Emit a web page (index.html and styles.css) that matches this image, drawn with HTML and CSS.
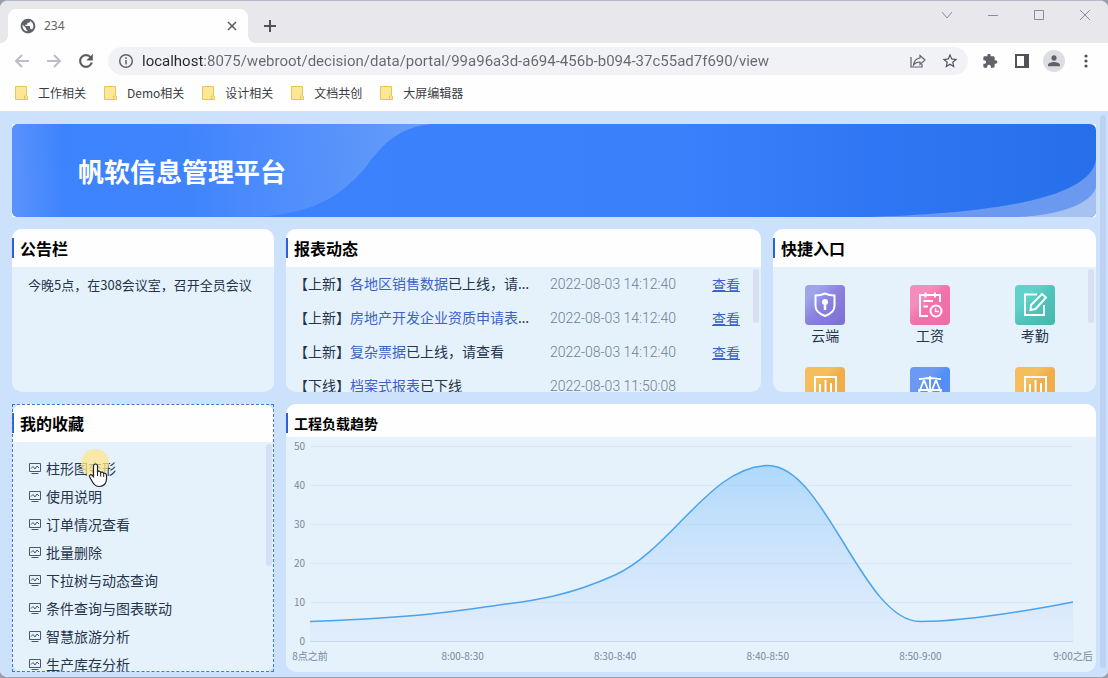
FILE: index.html
```html
<!DOCTYPE html>
<html lang="zh-CN">
<head>
    <meta charset="UTF-8">
    <title>234</title>
    <link rel="stylesheet" href="styles.css">
</head>
<body>
    <div class="window">
        <!-- 标签栏 -->
        <div class="tab-strip">
            <div class="tab">
                <svg class="icon-16" viewBox="0 0 24 24" fill="#5f6368"><path d="M12 1C5.9 1 1 5.9 1 12s4.9 11 11 11 11-4.900 11-11S18.100 1 12 1zm-1 19c-4-.5-7.200-3.900-7.200-8 0-.6.1-1.200.2-1.800L9 15v1c0 1.100.9 2 2 2v2zm6.900-2.600c-.3-.8-1-1.400-1.900-1.400h-1v-3c0-.6-.4-1-1-1H8v-2h2c.6 0 1-.4 1-1V7h2c1.100 0 2-.9 2-2v-.4c2.900 1.200 5 4.100 5 7.400 0 2.100-.8 4-2.100 5.400z"/></svg>
                <span class="tab-title">234</span>
                <button class="tab-close" aria-label="关闭标签页">
                    <svg width="10" height="10" viewBox="0 0 10 10" stroke="#55585d" stroke-width="1.500"><path d="M1 1l8 8M9 1l-8 8"/></svg>
                </button>
            </div>
            <button class="new-tab" aria-label="新标签页">
                <svg width="14" height="14" viewBox="0 0 14 14" stroke="#505359" stroke-width="2"><path d="M7 1v12M1 7h12"/></svg>
            </button>
            <div class="window-buttons">
                <button aria-label="搜索标签页"><svg width="12" height="12" viewBox="0 0 12 12" fill="none" stroke="#8a8d9c"><path d="M1 3l5 6 5-6"/></svg></button>
                <button aria-label="最小化"><svg width="12" height="12" viewBox="0 0 12 12" fill="none" stroke="#8a8d9c"><path d="M1 6.500h10"/></svg></button>
                <button aria-label="最大化"><svg width="12" height="12" viewBox="0 0 12 12" fill="none" stroke="#8a8d9c"><path d="M1.500 1.500h9v9h-9z"/></svg></button>
                <button aria-label="关闭"><svg width="12" height="12" viewBox="0 0 12 12" fill="none" stroke="#8a8d9c"><path d="M1 1l10 10M11 1L1 11"/></svg></button>
            </div>
        </div>

        <!-- 地址栏 -->
        <div class="toolbar">
            <button class="tool" aria-label="后退"><svg class="icon-16" viewBox="0 0 16 16" fill="none" stroke="#bbbec7" stroke-width="2"><path d="M15 8H2M8 2L2 8l6 6"/></svg></button>
            <button class="tool" aria-label="前进"><svg class="icon-16" viewBox="0 0 16 16" fill="none" stroke="#bbbec7" stroke-width="2"><path d="M1 8h13M8 2l6 6-6 6"/></svg></button>
            <button class="tool" aria-label="刷新"><svg class="icon-20" viewBox="0 0 24 24" fill="#55585d"><path d="M17.650 6.350C16.200 4.900 14.210 4 12 4c-4.420 0-7.990 3.580-7.990 8s3.570 8 7.990 8c3.730 0 6.840-2.550 7.730-6h-2.080c-.82 2.330-3.040 4-5.650 4-3.310 0-6-2.690-6-6s2.690-6 6-6c1.660 0 3.140.69 4.220 1.780L13 11h7V4l-2.350 2.350z" stroke="#55585d" stroke-width=".5"/></svg></button>
            <div class="address">
                <svg class="icon-16" viewBox="0 0 16 16" fill="none" stroke="#5f6368" stroke-width="1.500"><circle cx="8" cy="8" r="6.300"/><path d="M8 7v4.500M8 4.300v1.600"/></svg>
                <input class="url" type="text" aria-label="地址" value="localhost:8075/webroot/decision/data/portal/99a96a3d-a694-456b-b094-37c55ad7f690/view">
                <button class="tool" aria-label="分享"><svg class="icon-16" viewBox="0 0 16 16" fill="none" stroke="#5f6368" stroke-width="1.200"><path d="M1 4v10h11v-3"/><path d="M10 2.500L15 7l-5 4.500V9C7 9 5 10 3.500 12 4 8 6.500 5.500 10 5z"/></svg></button>
                <button class="tool" aria-label="收藏"><svg class="icon-18" viewBox="0 0 24 24" fill="#505359"><path d="M22 9.240l-7.190-.62L12 2 9.190 8.630 2 9.240l5.460 4.730L5.820 21 12 17.270 18.180 21l-1.630-7.030L22 9.240zM12 15.400l-3.760 2.270 1-4.280-3.320-2.880 4.380-.38L12 6.100l1.710 4.040 4.380.38-3.320 2.880 1 4.280L12 15.400z"/></svg></button>
            </div>
            <button class="tool" aria-label="扩展程序"><svg class="icon-16" viewBox="0 0 24 24" fill="#5f6368"><path d="M20.500 11H19V7c0-1.100-.9-2-2-2h-4V3.500C13 2.120 11.880 1 10.500 1S8 2.120 8 3.500V5H4c-1.100 0-2 .9-2 2v3.800h1.500c1.490 0 2.700 1.210 2.700 2.700s-1.210 2.700-2.700 2.700H2V20c0 1.100.9 2 2 2h3.800v-1.500c0-1.490 1.210-2.700 2.700-2.700s2.700 1.210 2.700 2.700V22H17c1.100 0 2-.9 2-2v-4h1.500c1.380 0 2.500-1.120 2.500-2.500S21.880 11 20.500 11z"/></svg></button>
            <button class="tool" aria-label="侧边栏"><svg width="14" height="14" viewBox="0 0 14 14"><path fill="#505359" fill-rule="evenodd" d="M0 0h14v14H0zM2 2v10h7V2z"/></svg></button>
            <button class="tool avatar" aria-label="用户"><svg class="icon-16" viewBox="0 0 24 24" fill="#5f6368"><path d="M12 11.500c2.200 0 4-1.800 4-4s-1.800-4-4-4-4 1.800-4 4 1.800 4 4 4zm0 2c-3 0-9 1.300-9 4.500v2h18v-2c0-3.200-6-4.500-9-4.500z"/></svg></button>
            <button class="tool" aria-label="更多"><svg class="icon-16" viewBox="0 0 16 16" fill="#505359"><circle cx="8" cy="3" r="1.600"/><circle cx="8" cy="8" r="1.600"/><circle cx="8" cy="13" r="1.600"/></svg></button>
        </div>

        <!-- 书签栏 -->
        <nav class="bookmarks">
            <a href="#"><svg class="folder" viewBox="0 0 13 14"><path d="M.5.5h11v9l1 1v3H.5z" fill="#fbe795" stroke="#e9c558"/><path d="M9.500 13v-3h2" fill="none" stroke="#e9c558"/></svg>工作相关</a>
            <a href="#"><svg class="folder" viewBox="0 0 13 14"><path d="M.5.5h11v9l1 1v3H.5z" fill="#fbe795" stroke="#e9c558"/><path d="M9.500 13v-3h2" fill="none" stroke="#e9c558"/></svg>Demo相关</a>
            <a href="#"><svg class="folder" viewBox="0 0 13 14"><path d="M.5.5h11v9l1 1v3H.5z" fill="#fbe795" stroke="#e9c558"/><path d="M9.500 13v-3h2" fill="none" stroke="#e9c558"/></svg>设计相关</a>
            <a href="#"><svg class="folder" viewBox="0 0 13 14"><path d="M.5.5h11v9l1 1v3H.5z" fill="#fbe795" stroke="#e9c558"/><path d="M9.500 13v-3h2" fill="none" stroke="#e9c558"/></svg>文档共创</a>
            <a href="#"><svg class="folder" viewBox="0 0 13 14"><path d="M.5.5h11v9l1 1v3H.5z" fill="#fbe795" stroke="#e9c558"/><path d="M9.500 13v-3h2" fill="none" stroke="#e9c558"/></svg>大屏编辑器</a>
        </nav>

        <!-- 门户页面 -->
        <main class="portal">
            <header class="banner">
                <svg class="banner-bg" viewBox="0 0 1084 93" preserveAspectRatio="none">
                    <defs>
                        <linearGradient id="base" x1="0" x2="1" y1="0" y2="0">
                            <stop offset="0" stop-color="#3f83fd"/>
                            <stop offset=".62" stop-color="#3a80fb"/>
                            <stop offset=".8" stop-color="#2f76f4"/>
                            <stop offset="1" stop-color="#276fea"/>
                        </linearGradient>
                        <linearGradient id="wave" gradientUnits="userSpaceOnUse" x1="0" y1="0" x2="430" y2="-20">
                            <stop offset="0" stop-color="#5992fb"/>
                            <stop offset=".12" stop-color="#3d83fd"/>
                            <stop offset=".4" stop-color="#4084fc"/>
                            <stop offset=".75" stop-color="#5893fb"/>
                            <stop offset="1" stop-color="#689ff6"/>
                        </linearGradient>
                    </defs>
                    <path d="M0 0h1084v93H0z" fill="url(#base)"/>
                    <path d="M0 0h420C385 3 370 22 356 40C334 68 305 91 240 93H0z" fill="url(#wave)"/>
                    <path d="M855 93C960 90 1080 78 1084 35V93z" fill="#6c99f0"/>
                    <path d="M1005 93C1045 92 1080 80 1084 63V93z" fill="#a5c2f0"/>
                </svg>
                <h1>帆软信息管理平台</h1>
            </header>

            <section class="card">
                <div class="card-head"><h2>公告栏</h2></div>
                <div class="card-body">
                    <p class="notice">今晚5点，在308会议室，召开全员会议</p>
                </div>
            </section>

            <section class="card">
                <div class="card-head"><h2>报表动态</h2></div>
                <div class="card-body">
                    <table class="feed">
                        <tbody>
                            <tr>
                                <td class="feed-title">【上新】<span>各地区销售数据</span>已上线，请查看</td>
                                <td class="feed-time">2022-08-03 14:12:40</td>
                                <td class="feed-link"><a href="#">查看</a></td>
                            </tr>
                            <tr>
                                <td class="feed-title">【上新】<span>房地产开发企业资质申请表</span>上线</td>
                                <td class="feed-time">2022-08-03 14:12:40</td>
                                <td class="feed-link"><a href="#">查看</a></td>
                            </tr>
                            <tr>
                                <td class="feed-title">【上新】<span>复杂票据</span>已上线，请查看</td>
                                <td class="feed-time">2022-08-03 14:12:40</td>
                                <td class="feed-link"><a href="#">查看</a></td>
                            </tr>
                            <tr>
                                <td class="feed-title">【下线】<span>档案式报表</span>已下线</td>
                                <td class="feed-time">2022-08-03 11:50:08</td>
                                <td class="feed-link"></td>
                            </tr>
                        </tbody>
                    </table>
                    <div class="thumb thumb-short"></div>
                </div>
            </section>

            <section class="card">
                <div class="card-head"><h2>快捷入口</h2></div>
                <div class="card-body">
                    <div class="entries">
                        <a class="entry" href="#">
                            <svg class="tile purple" viewBox="0 0 40 40" fill="none" stroke="#fff" stroke-width="2"><path d="M20 8.500c3 1.500 6 2 9.500 2v10.500c0 5-4 8-9.500 10-5.500-2-9.500-5-9.500-10V10.500c3.500 0 6.500-.5 9.500-2z"/><circle cx="20" cy="17" r="3" fill="#fff" stroke="none"/><path d="M20 18v7" stroke-width="2.500"/></svg>
                            <span>云端</span>
                        </a>
                        <a class="entry" href="#">
                            <svg class="tile pink" viewBox="0 0 40 40" fill="none" stroke="#fff" stroke-width="2"><path d="M18 31h-8V10h20v7M15.500 7.500v5M25 7.500v5M13.500 16h9.500M13.500 21.500h4.500"/><circle cx="26" cy="26" r="5.500"/><path d="M25.500 23v3.500H29" stroke-width="1.500"/></svg>
                            <span>工资</span>
                        </a>
                        <a class="entry" href="#">
                            <svg class="tile teal" viewBox="0 0 40 40" fill="none" stroke="#fff" stroke-width="2"><path d="M22 9.500H10V30h19V20"/><path d="M27 9l4 3.500L20.500 24 15.500 25l.5-5z"/></svg>
                            <span>考勤</span>
                        </a>
                        <a class="entry" href="#">
                            <svg class="tile orange" viewBox="0 0 40 40" fill="none" stroke="#fff" stroke-width="2"><path d="M10 10h21v21H10zM15 17v10M20.500 13v14M26 16v11"/></svg>
                            <span>报表</span>
                        </a>
                        <a class="entry" href="#">
                            <svg class="tile blue" viewBox="0 0 40 40" fill="none" stroke="#fff" stroke-width="1.800"><path d="M20 9v21M14 31h12M9 12c5 0 7-1 11-1s6 1 11 1M14 13l-4 10M14 13l4 10M26 13l-4 10M26 13l4 10M9 23h10c0 5-10 5-10 0zM21 23h10c0 5-10 5-10 0z"/></svg>
                            <span>法务</span>
                        </a>
                        <a class="entry" href="#">
                            <svg class="tile orange" viewBox="0 0 40 40" fill="none" stroke="#fff" stroke-width="2"><path d="M10 10h21v21H10zM15 17v10M20.500 13v14M26 16v11"/></svg>
                            <span>分析</span>
                        </a>
                    </div>
                    <div class="thumb thumb-short"></div>
                </div>
            </section>

            <div class="selected">
                <section class="card">
                    <div class="card-head"><h2>我的收藏</h2></div>
                    <div class="card-body">
                        <ul class="favorites" id="favorites"></ul>
                        <div class="thumb thumb-long"></div>
                    </div>
                </section>
                <!-- 鼠标指针 -->
                <svg class="pointer" viewBox="0 0 32 40">
                    <circle cx="15" cy="14" r="14" fill="#fde58c" fill-opacity=".75"/>
                    <path d="M15.500 15c1.200 0 2 .8 2 2v6c.5-1.200 3-1 3.200.6.8-1 2.800-.6 3 .9 1-.6 2.800 0 2.800 1.800V30c0 4-2.500 7.500-7 7.500-4 0-5.500-1.500-7-4.500l-2.800-5c-.8-1.500.8-3 2.300-1.800l1.500 1.600V17c0-1.200.8-2 2-2z" fill="#fff" stroke="#222" stroke-width="1.200"/>
                    <path d="M17.500 23v4M20.700 24v3.500M23.700 25v3" stroke="#222"/>
                </svg>
            </div>

            <section class="card card-chart">
                <div class="card-head"><h2>工程负载趋势</h2></div>
                <div class="card-body chart">
                    <div class="y-axis">
                        <span>50</span><span>40</span><span>30</span><span>20</span><span>10</span><span>0</span>
                    </div>
                    <svg class="plot" viewBox="0 0 763 195" preserveAspectRatio="none">
                        <defs>
                            <linearGradient id="area" gradientUnits="userSpaceOnUse" x1="0" y1="19" x2="0" y2="195">
                                <stop offset="0" stop-color="#4cabfa" stop-opacity=".36"/>
                                <stop offset="1" stop-color="#d0d8fa" stop-opacity=".2"/>
                            </linearGradient>
                        </defs>
                        <path class="grid-line" d="M0 .5h763M0 39.500h763M0 78.500h763M0 117.500h763M0 156.500h763"/>
                        <path class="axis-line" d="M0 195.500h763"/>
                        <path fill="url(#area)" d="M0 175.500C0 175.500 96 172.500 153 164S248 155 305 129S401 19.500 458 19.500S553 175.500 610 175.500S763 156 763 156V195H0z"/>
                        <path class="curve" d="M0 175.500C0 175.500 96 172.500 153 164S248 155 305 129S401 19.500 458 19.500S553 175.500 610 175.500S763 156 763 156"/>
                    </svg>
                    <div class="x-axis">
                        <span>8点之前</span><span>8:00-8:30</span><span>8:30-8:40</span><span>8:40-8:50</span><span>8:50-9:00</span><span>9:00之后</span>
                    </div>
                </div>
            </section>
            <div class="page-thumb"></div>
        </main>
    </div>

    <script>
        // 收藏列表
        const FAVORITES = ['柱形图变形', '使用说明', '订单情况查看', '批量删除', '下拉树与动态查询', '条件查询与图表联动', '智慧旅游分析', '生产库存分析'];

        const ICON = `
            <svg width="12" height="12" viewBox="0 0 12 12" fill="none" stroke="#4a566b">
                <path d="M.5 1.500h11v8H.5zM2.500 11.500h7"/>
                <path d="M2 6.500l2-2 2 2.500 2-3 2 2"/>
            </svg>`;

        document.getElementById('favorites').innerHTML = FAVORITES
            .map(name => `<li><a href="#">${ICON}${name}</a></li>`)
            .join('');
    </script>
</body>
</html>
```

FILE: styles.css
```css
* {
    box-sizing: border-box;
}

body {
    margin: 0;
    background: #9a9ea8;
    font-family: "Noto Sans CJK SC", sans-serif;
    font-size: 14px;
    line-height: 20px;
    color: #26344a;
}

h1, h2, p, ul {
    margin: 0;
    padding: 0;
}

a {
    color: inherit;
    text-decoration: none;
}

button {
    display: flex;
    align-items: center;
    justify-content: center;
    padding: 0;
    border: 0;
    background: none;
}

svg {
    display: block;
    flex: none;
}

.icon-16 {
    width: 16px;
    height: 16px;
}

.icon-18 {
    width: 18px;
    height: 18px;
}

.icon-20 {
    width: 20px;
    height: 20px;
}

.window {
    display: flex;
    flex-direction: column;
    height: 100vh;
    border-top: 1px solid #b6bac8;
    border-bottom: 1px solid #9a9ea8;
    border-radius: 8px;
    overflow: hidden;
    background: #fefefe;
}

/* 标签栏 */
.tab-strip {
    display: flex;
    height: 42px;
    flex: none;
    padding: 8px 0 0 8px;
    background: #e8e8ec;
}

.tab {
    position: relative;
    display: flex;
    align-items: center;
    width: 240px;
    padding: 0 10px 0 12px;
    border-radius: 8px 8px 0 0;
    background: #fefefe;
}

.tab::before,
.tab::after {
    content: "";
    position: absolute;
    bottom: 0;
    width: 8px;
    height: 8px;
}

.tab::before {
    right: 100%;
    background: radial-gradient(circle at 0 0, #e8e8ec 8px, #fefefe 8px);
}

.tab::after {
    left: 100%;
    background: radial-gradient(circle at 100% 0, #e8e8ec 8px, #fefefe 8px);
}

.tab-title {
    flex: 1;
    margin-left: 8px;
    font-family: "Noto Sans", sans-serif;
    font-size: 12px;
    color: #5f6368;
}

.tab-close {
    width: 12px;
    height: 16px;
}

.new-tab {
    width: 28px;
    margin-left: 8px;
}

.window-buttons {
    display: flex;
    margin-left: auto;
}

.window-buttons button {
    width: 46px;
    height: 12px;
}

/* 地址栏 */
.toolbar {
    display: flex;
    align-items: center;
    gap: 8px;
    height: 36px;
    flex: none;
    padding: 0 10px;
}

.tool {
    width: 24px;
    height: 24px;
    flex: none;
}

.avatar {
    width: 22px;
    height: 22px;
    margin: 0 1px;
    border-radius: 50%;
    background: #dddee4;
}

.address {
    display: flex;
    flex: 1;
    align-items: center;
    gap: 8px;
    height: 28px;
    margin: 0 2px;
    padding: 0 6px 0 10px;
    border-radius: 14px;
    background: #f1f2f6;
}

.url {
    flex: 1;
    min-width: 0;
    height: 24px;
    padding: 0;
    border: 0;
    outline: 0;
    font-family: Roboto, sans-serif;
    font-size: 15px;
    color: transparent;
    background: linear-gradient(to right, #25272b 62px, #64686e 62px);
    -webkit-background-clip: text;
    background-clip: text;
}

/* 书签栏 */
.bookmarks {
    display: flex;
    gap: 18px;
    align-items: center;
    height: 33px;
    flex: none;
    padding: 0 15px 4px;
    border-bottom: 1px solid #dcdde0;
    font-size: 12px;
    color: #3a3d42;
}

.bookmarks a {
    display: flex;
    align-items: center;
    gap: 10px;
}

.folder {
    width: 13px;
    height: 14px;
}

/* 门户页面 */
.portal {
    position: relative;
    display: grid;
    flex: 1;
    min-height: 0;
    grid-template-columns: 262fr 475fr 323fr;
    grid-template-rows: 93px 163fr 268fr;
    gap: 12px;
    padding: 12px 12px 5px;
    background: #cbe1fc;
}

.banner {
    display: grid;
    grid-column: 1 / -1;
    align-items: center;
    background: #f2f7ff;
}

.banner-bg,
.banner h1 {
    grid-area: 1 / 1;
}

.banner-bg {
    width: 100%;
    height: 93px;
    border-radius: 6px;
}

.banner h1 {
    position: relative;
    padding-left: 66px;
    font-size: 26px;
    line-height: 38px;
    color: #fff;
}

.card {
    display: flex;
    flex-direction: column;
    min-width: 0;
    min-height: 0;
    border-radius: 10px;
    overflow: hidden;
    background: #e5f2fc;
}

.card-head {
    flex: none;
    padding: 9px 0;
    background: #fefefe;
}

.card-head h2 {
    padding-left: 6px;
    border-left: 2px solid #2f5fd8;
    font-size: 16px;
    line-height: 20px;
    color: #000;
}

.card-body {
    position: relative;
    flex: 1;
    min-height: 0;
    overflow: hidden;
}

.thumb {
    position: absolute;
    top: 2px;
    right: 2px;
    width: 6px;
    border-radius: 3px;
    background: #d5e1f2;
}

.thumb-short {
    height: 54px;
}

.thumb-long {
    height: 122px;
}

.page-thumb {
    position: absolute;
    top: 3px;
    right: 2px;
    bottom: 9px;
    width: 6px;
    border-radius: 3px;
    background: #bed3f3;
}

.notice {
    padding: 8px 16px;
    font-size: 13px;
}

/* 报表动态 */
.feed {
    width: 100%;
    table-layout: fixed;
    border-collapse: collapse;
}

.feed td {
    height: 34px;
    padding: 0;
    white-space: nowrap;
}

.feed .feed-title {
    padding: 0 18px 0 8px;
    overflow: hidden;
    text-overflow: ellipsis;
    font-family: "Noto Sans", "Noto Sans CJK SC", sans-serif;
}

.feed-title span,
.feed-link a {
    color: #3c62c6;
}

.feed-time {
    width: 162px;
    font-family: Roboto, sans-serif;
    font-weight: 300;
    color: #6f7e94;
}

.feed-link {
    width: 49px;
}

.feed-link a {
    text-decoration: underline;
    text-underline-offset: 1px;
}

/* 快捷入口 */
.entries {
    display: grid;
    grid-template-columns: repeat(3, 1fr);
    row-gap: 22px;
    padding: 18px 9px 0 0;
}

.entry {
    display: flex;
    flex-direction: column;
    align-items: center;
}

.tile {
    width: 40px;
    height: 40px;
    border-radius: 4px;
}

.purple {
    background: linear-gradient(135deg, #9da4ea 20%, #8b80df 50%, #7b70cf);
}

.pink {
    background: linear-gradient(135deg, #f58cbc 30%, #f272ac 50%, #f06ba8);
}

.teal {
    background: linear-gradient(135deg, #5fd3cb 30%, #50c5bc 50%, #48b5ad);
}

.orange {
    background: linear-gradient(135deg, #f6bd5c 35%, #f0ae4a 50%);
}

.blue {
    background: linear-gradient(135deg, #6c9af2 35%, #548ff8 50%);
}

/* 我的收藏 */
.selected {
    position: relative;
    display: grid;
    min-height: 0;
}

.selected::after {
    content: "";
    position: absolute;
    inset: 0;
    border: 1px dashed #3f78d8;
    pointer-events: none;
}

.favorites {
    padding: 12px 17px 0;
    list-style: none;
}

.favorites a {
    display: flex;
    align-items: center;
    gap: 5px;
    height: 28px;
}

.pointer {
    position: absolute;
    top: 45px;
    left: 68px;
    width: 32px;
    height: 40px;
}

/* 工程负载趋势 */
.card-chart {
    grid-column: 2 / -1;
}

.card-chart .card-head {
    padding-bottom: 4px;
}

.card-chart h2 {
    font-size: 14px;
}

.chart {
    display: grid;
    grid-template-columns: 19px 1fr;
    grid-template-rows: 1fr 16px;
    gap: 7px 5px;
    padding: 9px 23px 8px 0;
    font-size: 10px;
    color: #7a879c;
}

.y-axis {
    display: flex;
    flex-direction: column;
    justify-content: space-between;
    text-align: right;
}

.y-axis span {
    height: 0;
    line-height: 0;
}

.plot {
    width: 100%;
    height: 100%;
    min-height: 0;
    overflow: visible;
}

.grid-line {
    stroke: #d8e6f8;
}

.axis-line {
    stroke: #c9d8ea;
}

.curve {
    fill: none;
    stroke: #4ba3ec;
    stroke-width: 1.5;
}

.x-axis {
    display: flex;
    grid-column: 2;
    justify-content: space-between;
    line-height: 16px;
}

.x-axis span {
    display: flex;
    justify-content: center;
    width: 0;
    white-space: nowrap;
}
```
